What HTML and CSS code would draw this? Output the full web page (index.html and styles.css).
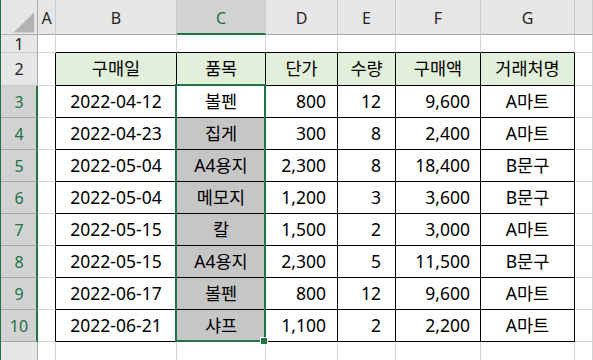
FILE: index.html
```html
<!DOCTYPE html>
<html lang="ko">
<head>
<meta charset="utf-8">
<link rel="stylesheet" href="styles.css">
</head>
<body>
<div class="sheet">
  <div class="ch corner"><svg class="tri" width="37" height="34" viewBox="0 0 37 34"><polygon points="34,11 34,32 13,32" fill="#b4b4b4"/></svg></div>
  <div class="ch">A</div>
  <div class="ch">B</div>
  <div class="ch sel">C</div>
  <div class="ch">D</div>
  <div class="ch">E</div>
  <div class="ch">F</div>
  <div class="ch">G</div>
  <div class="ch"></div>

  <div class="rh">1</div>
  <div class="c"></div><div class="c tt"></div><div class="c tt"></div><div class="c tt"></div><div class="c tt"></div><div class="c tt"></div><div class="c tt"></div><div class="c"></div>

  <div class="rh">2</div>
  <div class="c tl"></div><div class="c t hd">구매일</div><div class="c t hd">품목</div><div class="c t hd">단가</div><div class="c t hd">수량</div><div class="c t hd">구매액</div><div class="c t hd">거래처명</div><div class="c"></div>

  <div class="rh sel">3</div>
  <div class="c tl"></div><div class="c t ctr">2022-04-12</div><div class="c t ctr active">볼펜<span class="selection"><span class="handle"></span></span></div><div class="c t rd">800</div><div class="c t re">12</div><div class="c t rf">9,600</div><div class="c t ctr">A마트</div><div class="c"></div>

  <div class="rh sel">4</div>
  <div class="c tl"></div><div class="c t ctr">2022-04-23</div><div class="c t ctr gray">집게</div><div class="c t rd">300</div><div class="c t re">8</div><div class="c t rf">2,400</div><div class="c t ctr">A마트</div><div class="c"></div>

  <div class="rh sel">5</div>
  <div class="c tl"></div><div class="c t ctr">2022-05-04</div><div class="c t ctr gray">A4용지</div><div class="c t rd">2,300</div><div class="c t re">8</div><div class="c t rf">18,400</div><div class="c t ctr">B문구</div><div class="c"></div>

  <div class="rh sel">6</div>
  <div class="c tl"></div><div class="c t ctr">2022-05-04</div><div class="c t ctr gray">메모지</div><div class="c t rd">1,200</div><div class="c t re">3</div><div class="c t rf">3,600</div><div class="c t ctr">B문구</div><div class="c"></div>

  <div class="rh sel">7</div>
  <div class="c tl"></div><div class="c t ctr">2022-05-15</div><div class="c t ctr gray">칼</div><div class="c t rd">1,500</div><div class="c t re">2</div><div class="c t rf">3,000</div><div class="c t ctr">A마트</div><div class="c"></div>

  <div class="rh sel">8</div>
  <div class="c tl"></div><div class="c t ctr">2022-05-15</div><div class="c t ctr gray">A4용지</div><div class="c t rd">2,300</div><div class="c t re">5</div><div class="c t rf">11,500</div><div class="c t ctr">B문구</div><div class="c"></div>

  <div class="rh sel">9</div>
  <div class="c tl"></div><div class="c t ctr">2022-06-17</div><div class="c t ctr gray">볼펜</div><div class="c t rd">800</div><div class="c t re">12</div><div class="c t rf">9,600</div><div class="c t ctr">A마트</div><div class="c"></div>

  <div class="rh sel">10</div>
  <div class="c tl"></div><div class="c t ctr">2022-06-21</div><div class="c t ctr gray">샤프</div><div class="c t rd">1,100</div><div class="c t re">2</div><div class="c t rf">2,200</div><div class="c t ctr">A마트</div><div class="c"></div>

  <div class="rh"></div>
  <div class="c"></div><div class="c"></div><div class="c"></div><div class="c"></div><div class="c"></div><div class="c"></div><div class="c"></div><div class="c"></div>
</div>
</body>
</html>
```

FILE: styles.css
```css
html, body {
  margin: 0;
  padding: 0;
  background: #ffffff;
}
body {
  width: 593px;
  height: 360px;
  overflow: hidden;
  border-left: 1px solid #217346;
  box-sizing: border-box;
}
.sheet {
  display: grid;
  grid-template-columns: 37px 18px 121px 89px 72px 58px 85px 94px 1fr;
  grid-template-rows: 35px 18px 33px repeat(8, 32px) 19px;
  font-family: "Noto Sans", "Noto Sans CJK KR", sans-serif;
  font-size: 17.5px;
  color: #000;
}
.sheet > div {
  box-sizing: border-box;
  display: flex;
  align-items: center;
  min-width: 0;
  white-space: nowrap;
  line-height: 1;
}
.ch {
  background: #e6e6e6;
  border-right: 1px solid #cacaca;
  border-bottom: 1px solid #ababab;
  justify-content: center;
  font-size: 16px;
  color: #262626;
  padding-top: 1px;
}
.ch.sel {
  background: #d2d2d2;
  color: #217346;
  border-bottom: 2px solid #217346;
  padding-top: 2px;
}
.corner {
  border-right-color: #ababab;
}
.tri {
  display: block;
}
.rh {
  background: #e6e6e6;
  border-right: 1px solid #ababab;
  border-bottom: 1px solid #cacaca;
  justify-content: center;
  font-size: 16px;
  color: #262626;
}
.rh.sel {
  background: #d2d2d2;
  color: #217346;
  border-right: 2px solid #217346;
  border-bottom-color: #a6a6a6;
  padding-left: 1px;
}
.c {
  border-right: 1px solid #d4d4d4;
  border-bottom: 1px solid #d4d4d4;
  background: #ffffff;
}
.c.tt {
  border-bottom-color: #000;
}
.c.tl {
  border-right-color: #000;
}
.c.t {
  border-right-color: #000;
  border-bottom-color: #000;
}
.hd {
  background: #e2efda;
  justify-content: center;
}
.ctr {
  justify-content: center;
}
.rd {
  justify-content: flex-end;
  padding-right: 11px;
}
.re {
  justify-content: flex-end;
  padding-right: 14px;
}
.rf {
  justify-content: flex-end;
  padding-right: 10px;
}
.gray {
  background: #c6c6c6;
}
.active {
  position: relative;
}
.selection {
  position: absolute;
  top: -2px;
  left: -2px;
  width: 91px;
  height: 258px;
  box-sizing: border-box;
  border: 2px solid #217346;
  z-index: 2;
  pointer-events: none;
}
.handle {
  position: absolute;
  right: -4px;
  bottom: -5px;
  width: 6px;
  height: 6px;
  background: #217346;
  border: 1px solid #ffffff;
}
```
